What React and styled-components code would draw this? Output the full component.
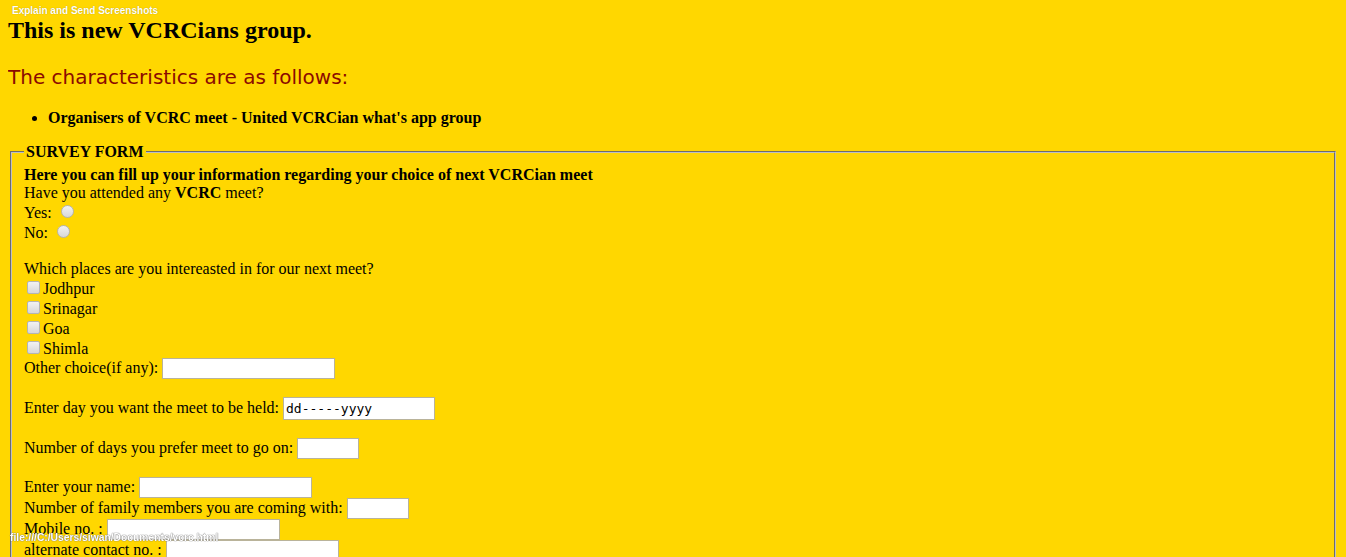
import React from "react";
import styled, { createGlobalStyle } from "styled-components";

const GlobalStyle = createGlobalStyle`
  html, body {
    background: #ffd700;
  }
  body {
    margin: 8px;
    font-family: "Liberation Serif", "Times New Roman", serif;
    font-size: 16px;
    color: #000;
  }
`;

const Page = styled.div``;

const Title = styled.h2`
  font-size: 24px;
  font-weight: bold;
  margin: 9px 0 0;
`;

const SubTitle = styled.h3`
  font-family: "DejaVu Sans", Verdana, sans-serif;
  font-weight: normal;
  font-size: 20px;
  color: #8b0a00;
  margin: 21px 0 0;
`;

const Points = styled.ul`
  margin: 20px 0 16px;
  padding-left: 40px;
  font-weight: bold;
`;

const Survey = styled.fieldset`
  margin: 0 2px;
  border: 2px groove rgb(192, 192, 192);
  padding: 5px 12px 10px;
`;

const Legend = styled.legend`
  font-weight: bold;
  padding: 0 2px;
`;

const Radio = styled.input.attrs({ type: "radio" })`
  appearance: none;
  width: 13px;
  height: 13px;
  margin: 3px 3px 0 5px;
  border: 1px solid #b4b4b4;
  border-radius: 50%;
  background: linear-gradient(#f2f2f2, #d8d8d8);
  box-sizing: border-box;
  vertical-align: baseline;
`;

const Check = styled.input.attrs({ type: "checkbox" })`
  appearance: none;
  width: 13px;
  height: 13px;
  margin: 3px 3px 0 3px;
  border: 1px solid #b4b4b4;
  border-radius: 2px;
  background: linear-gradient(#f2f2f2, #d8d8d8);
  box-sizing: border-box;
  vertical-align: baseline;
`;

const Field = styled.input`
  width: ${(p) => p.$w || 173}px;
  height: ${(p) => p.$h || 21}px;
  box-sizing: border-box;
  border: 1px solid #b9b39a;
  background: #fff;
  padding: 1px 2px;
  font-family: ${(p) => (p.$mono ? '"DejaVu Sans Mono", monospace' : '"Liberation Sans", Arial, sans-serif')};
  font-size: 13px;
  color: #000;
  margin: 0;
  vertical-align: baseline;
`;

const TopNote = styled.div`
  position: absolute;
  left: 12px;
  top: 5px;
  font-family: "Liberation Sans", Arial, sans-serif;
  font-size: 10px;
  font-weight: bold;
  color: #fff;
  text-shadow: 0 0 1px rgba(120, 100, 0, 0.6);
`;

const FileNote = styled.div`
  position: fixed;
  left: 10px;
  top: 532px;
  font-family: "Liberation Sans", Arial, sans-serif;
  font-size: 10.3px;
  font-weight: bold;
  color: #fff;
  text-shadow: 0 0 1px #666, 0 0 1px #666;
`;

export default function App() {
  return (
    <Page>
      <GlobalStyle />
      <TopNote>Explain and Send Screenshots</TopNote>
      <Title>This is new VCRCians group.</Title>
      <SubTitle>The characteristics are as follows:</SubTitle>
      <Points>
        <li>Organisers of VCRC meet - United VCRCian what's app group</li>
      </Points>
      <Survey>
        <Legend>SURVEY FORM</Legend>
        <b>Here you can fill up your information regarding your choice of next VCRCian meet</b>
        <br />
        Have you attended any <b>VCRC</b> meet?
        <br />
        Yes: <Radio name="attended" />
        <br />
        No: <Radio name="attended" />
        <br />
        <br />
        Which places are you intereasted in for our next meet?
        <br />
        <Check />Jodhpur
        <br />
        <Check />Srinagar
        <br />
        <Check />Goa
        <br />
        <Check />Shimla
        <br />
        Other choice(if any): <Field type="text" />
        <br />
        <br />
        Enter day you want the meet to be held: <Field type="text" $w={152} $h={23} $mono readOnly value="dd-----yyyy" />
        <br />
        <br />
        Number of days you prefer meet to go on: <Field type="text" $w={62} />
        <br />
        <br />
        Enter your name: <Field type="text" />
        <br />
        Number of family members you are coming with: <Field type="text" $w={62} />
        <br />
        Mobile no. : <Field type="text" />
        <br />
        alternate contact no. : <Field type="text" />
        <br />
      </Survey>
      <FileNote>file:///C:/Users/siwan/Documents/vcrc.html</FileNote>
    </Page>
  );
}
